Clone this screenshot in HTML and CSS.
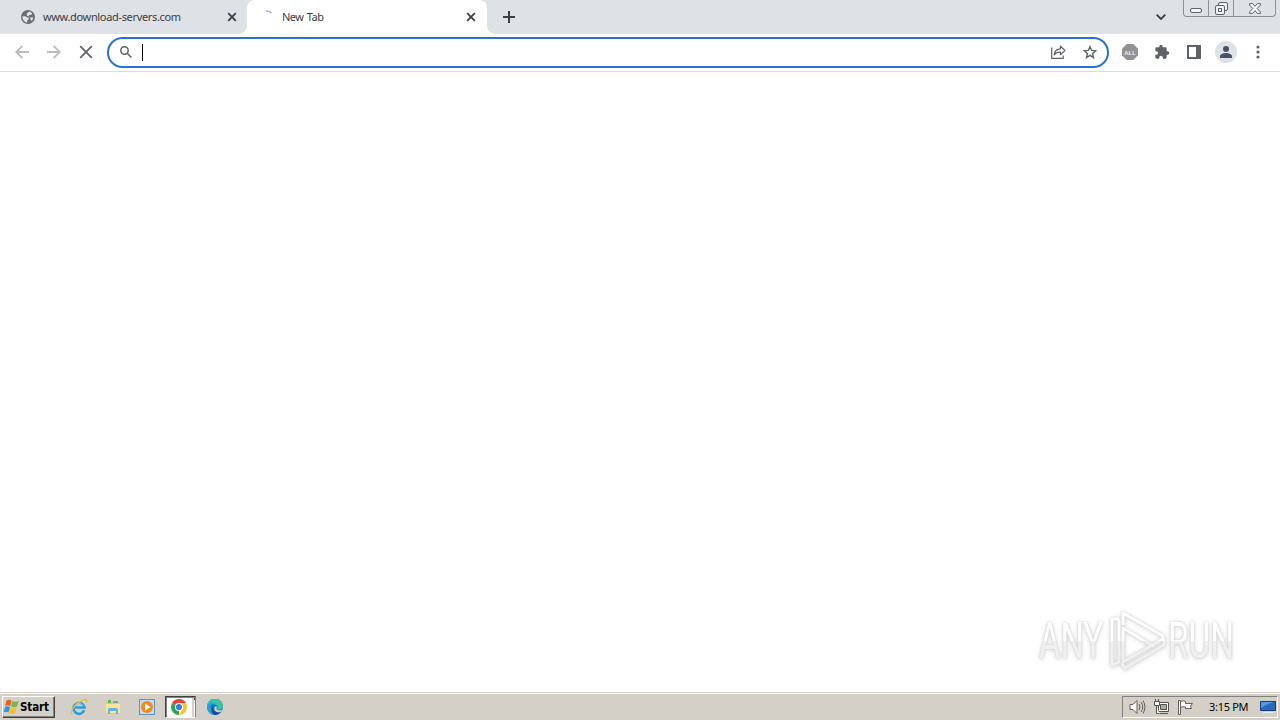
FILE: index.html
```
<!DOCTYPE html>
<html lang="en">
<head>
  <meta charset="UTF-8">
  <title>New Tab</title>
  <link rel="stylesheet" href="styles.css">
</head>
<body>
  <div class="tab-strip">
    <div class="tab">
      <svg class="favicon" width="14" height="14" viewBox="0 0 14 14">
        <circle cx="7" cy="7" r="7" fill="#6b6f74"/>
        <path d="M1.4 6.2h3.2l1.6 1.4h1.6v1.6L6.2 10.4v2.2A5.7 5.7 0 0 1 1.4 6.2zM7 2.2l2-.6 2.4 1.9-1.6 1.4H8.2L7.4 6.4 5.8 5.2V3.6zM8.6 7.4h3.8A5.6 5.6 0 0 1 10.4 11L9.6 9.4z" fill="#dee1e6"/>
      </svg>
      <span class="tab-title wide">www.download-servers.com</span>
      <svg class="close" width="10" height="10" viewBox="0 0 10 10"><path d="M1.2 1.2l7.6 7.6M8.8 1.2L1.2 8.8"/></svg>
    </div>
    <div class="tab active">
      <svg class="favicon" width="14" height="14" viewBox="0 0 14 14">
        <path d="M6 .9Q9 1 11.6 3" fill="none" stroke="#a9b9dd" stroke-width="1.8"/>
      </svg>
      <span class="tab-title">New Tab</span>
      <svg class="close" width="10" height="10" viewBox="0 0 10 10"><path d="M1.2 1.2l7.6 7.6M8.8 1.2L1.2 8.8"/></svg>
    </div>
    <svg class="new-tab" width="12" height="12" viewBox="0 0 12 12"><path d="M6 0v12M0 6h12" stroke="#3c4043" stroke-width="2"/></svg>
    <svg class="tab-search" width="10" height="6" viewBox="0 0 10 6"><path d="M.6.6L5 5 9.4.6" fill="none" stroke="#3c4043" stroke-width="1.8"/></svg>
    <div class="window-buttons">
      <div class="window-button minimize">
        <svg width="12" height="5" viewBox="0 0 12 5"><rect x=".5" y=".5" width="11" height="4" rx="1.5" fill="#f4f5f7" stroke="#5f636b"/></svg>
      </div>
      <div class="window-button restore">
        <svg width="13" height="13" viewBox="0 0 13 13" fill="#f0f1f4" stroke="#5f636b">
          <rect x="3.5" y=".5" width="9" height="8" rx="1.5"/>
          <rect x=".5" y="3.5" width="9" height="9" rx="1.5"/>
          <rect x="3.5" y="6.5" width="3" height="3"/>
        </svg>
      </div>
      <div class="window-button quit">
        <svg width="12" height="11" viewBox="0 0 12 11"><path d="M.6.6h3L6 3.3 8.4.6h3v1.5L8.2 5.5l3.2 3.4v1.5h-3L6 7.7l-2.4 2.7h-3V8.9l3.2-3.4L.6 2.1z" fill="#f4f5f7" stroke="#5f636b"/></svg>
      </div>
    </div>
  </div>

  <div class="toolbar">
    <div class="nav-buttons">
      <svg width="14" height="14" viewBox="0 0 14 14" class="muted"><path d="M14 7H1.5M7.4.8L1.2 7l6.2 6.2"/></svg>
      <svg width="14" height="14" viewBox="0 0 14 14" class="muted"><path d="M0 7h12.5M6.6.8L12.8 7l-6.2 6.2"/></svg>
      <svg width="14" height="14" viewBox="0 0 14 14"><path d="M1.2 1.2l11.6 11.6M12.8 1.2L1.2 12.8"/></svg>
    </div>
    <div class="omnibox">
      <svg width="12" height="12" viewBox="0 0 12 12" fill="none" stroke="#5f6368" stroke-width="1.5"><circle cx="4.5" cy="4.5" r="3.7"/><path d="M7.2 7.2l4.3 4.3"/></svg>
      <span class="caret"></span>
      <svg class="share" width="15" height="14" viewBox="0 0 15 14" fill="none" stroke="#5f6368" stroke-width="1.2">
        <path d="M.7 2.5v10.8h11.5v-2.8"/>
        <path d="M3.2 9.8C3.6 6 6 4 9.4 3.8V1.2L14 5.5 9.4 9.7V7.2C6.6 7.1 4.6 7.9 3.2 9.8z" stroke-linejoin="round"/>
      </svg>
      <svg width="14" height="14" viewBox="0 0 14 14"><path d="M7 1.6l1.6 3.8 4.2.4-3.2 2.7.9 4.1L7 10.4l-3.5 2.2.9-4.1-3.2-2.7 4.2-.4z" fill="none" stroke="#5f6368" stroke-width="1.4"/></svg>
    </div>
    <div class="extensions">
      <svg width="16" height="16" viewBox="0 0 16 16">
        <path d="M4.7 0h6.6L16 4.7v6.6L11.3 16H4.7L0 11.3V4.7z" fill="#929292"/>
        <text x="8" y="10.5" class="badge-text">ALL</text>
      </svg>
      <svg width="16" height="16" viewBox="0 0 24 24"><path fill="#5f6368" d="M20.5 11H19V7a2 2 0 0 0-2-2h-4V3.5a2.5 2.5 0 0 0-5 0V5H4a2 2 0 0 0-2 2v3.8h1.5a2.7 2.7 0 0 1 0 5.4H2V20a2 2 0 0 0 2 2h3.8v-1.5a2.7 2.7 0 0 1 5.4 0V22H17a2 2 0 0 0 2-2v-4h1.5a2.5 2.5 0 0 0 0-5z"/></svg>
      <svg width="16" height="16" viewBox="0 0 16 16"><path fill="#5f6368" fill-rule="evenodd" d="M1 1h14v14H1zM3 3v10h7V3z"/></svg>
      <svg class="avatar" width="22" height="22" viewBox="0 0 22 22"><circle cx="11" cy="11" r="11" fill="#dee1e6"/><circle cx="11" cy="8" r="3" fill="#475069"/><path d="M5 17v-1.7c0-2 3.5-3.3 6-3.3s6 1.300 6 3.300V17z" fill="#475069"/></svg>
      <svg class="menu" width="4" height="14" viewBox="0 0 4 14" fill="#5f6368"><circle cx="2" cy="2" r="1.6"/><circle cx="2" cy="7" r="1.6"/><circle cx="2" cy="12" r="1.6"/></svg>
    </div>
  </div>

  <div class="page">
    <svg class="watermark" width="200" height="64" viewBox="0 0 200 64">
      <defs>
        <linearGradient id="fade" x1="0" y1="0" x2="0" y2="64" gradientUnits="userSpaceOnUse"><stop offset=".51" stop-color="#fff"/><stop offset=".52" stop-color="#f0f0f0"/></linearGradient>
      </defs>
      <g fill="url(#fade)" class="mark-text">
        <text x="4" y="50" textLength="64" lengthAdjust="spacingAndGlyphs">ANY</text>
        <text x="133" y="50" textLength="66" lengthAdjust="spacingAndGlyphs">RUN</text>
      </g>
      <g fill="none" stroke="url(#fade)" stroke-width="3" stroke-linejoin="round" stroke-linecap="round">
        <path d="M118 38L88 20v34l40-23v-3L88 5v11"/>
        <path d="M83 11h-6v46l7-3V13"/>
        <path d="M129 32v5L90 60l-3-4"/>
      </g>
    </svg>
  </div>

  <div class="taskbar">
    <div class="start">
      <svg width="17" height="16" viewBox="0 0 17 16">
        <path d="M3.5 1.5q2.5-1.500 5 0L7.200 7q-2.500-1.500-5 0z" fill="#e85b2a"/>
        <path d="M9.3 2q2.5 1.5 6.5 0L14 7.6q-3 1.4-5.9 0z" fill="#7bb544"/>
        <path d="M2 8q2.5-1.5 5 0l-1.4 5.5q-2.5-1.5-5 0z" fill="#3d8fd6"/>
        <path d="M7.9 8.5q2.6 1.5 5.7 0l-1.5 5.6q-3 1.5-5.6 0z" fill="#f4bd2c"/>
      </svg>
      <span>Start</span>
    </div>
    <div class="quick-launch">
      <svg width="18" height="18" viewBox="0 0 18 18" fill="none">
        <path d="M14.2 12.3A5.5 5.5 0 1 1 14.5 9.5H4.5" stroke="#2b9fe0" stroke-width="2.6"/>
        <path d="M6 7.5Q9 3.5 13 7.5" stroke="#8bd5f7"/>
        <path d="M2.500 16C-1.5 15 5 5.8 12 2.5c4-2 5.5-.7 4.3 1.8" stroke="#e9bd3e" stroke-width="1.4"/>
      </svg>
      <svg width="16" height="16" viewBox="0 0 16 16">
        <path d="M1 2h5l1 1h7v12H1z" fill="#e8c967"/>
        <path d="M3 1h3v3H3z" fill="#67b865"/><path d="M8 2h5v2H8z" fill="#69a9d8"/>
        <path d="M1 5h14v9H1z" fill="#f7e399"/>
        <path d="M3 15v-4q0-2 2-2h6q2 0 2 2v4h-2v-3H5v3z" fill="#62b4e5"/>
      </svg>
      <svg class="player" width="16" height="16" viewBox="0 0 16 16"><rect x=".5" y=".5" width="15" height="15" fill="#c6dced" stroke="#5c94be"/><circle cx="8" cy="8" r="6" fill="#f28a1b"/><path d="M6 4.5v7L11.500 8z" fill="#fff"/></svg>
      <div class="running">
        <svg width="16" height="16" viewBox="0 0 16 16">
          <path d="M8 8L1.1 4A8 8 0 0 1 14.9 4z" fill="#df4434"/>
          <path d="M8 8v8A8 8 0 0 1 1.1 4z" fill="#32a350"/>
          <path d="M8 4h6.9A8 8 0 0 1 8 16l3.5-6z" fill="#f7c52b"/>
          <circle cx="8" cy="8" r="4" fill="#fff"/><circle cx="8" cy="8" r="3.1" fill="#347de5"/>
        </svg>
      </div>
      <svg class="edge" width="16" height="16" viewBox="0 0 16 16">
        <circle cx="8" cy="8" r="8" fill="#1976c5"/>
        <path d="M0 7.5A8 8 0 0 1 16 7c.2 3-2.5 4.2-5.5 3.7-1.2-.3-.5-1 0-2C11 6.5 8.5 5 5.5 5 2.5 5 .8 6.2 0 7.5z" fill="#39c3a5"/>
        <path d="M0 8C.8 3.5 5 2 9 4.5 5 4 2.5 6.5 4 11c.5 2 2 4 4 5A8 8 0 0 1 0 8z" fill="#23a5dc"/>
        <path d="M6.5 7.5c-1.5 4 2 6.5 7.5 5.5a8 8 0 0 1-6 3C4 14.5 3.5 9.5 6.5 7.5z" fill="#174b91"/>
        <path d="M10 8c-1.5 2 0 3.5 3 3.2 1.2 0 2-.5 2.5-1L14 13c-4 1-7.5-1-6.5-4.5Q8.5 6.5 10 8z" fill="#d4d0c8"/>
      </svg>
    </div>
    <div class="tray">
      <svg width="17" height="16" viewBox="0 0 17 16" fill="none" stroke="#62605c"><path d="M1 5.5h3l4-4v13l-4-4H1z" fill="#fff"/><path d="M10 5q2 3 0 6M12 3q3.5 5 0 10M14 1.5q4 6.5 0 13"/></svg>
      <svg width="17" height="16" viewBox="0 0 17 16" fill="#fff" stroke="#54524e"><path d="M5.5 3.5h10v9h-10zM7 14.5h8"/><path d="M7.5 5.5h6v5h-6z" fill="#aaa9a3"/><path d="M1.5 2.5h5v4h-5zM2.5 0v2M5.5 0v2M3.5 7v7.5h3"/></svg>
      <svg width="17" height="16" viewBox="0 0 17 16" fill="#fff" stroke="#62605c"><path d="M1.5 1.5h2v14h-2z"/><path d="M3.5 2.5q3-1.5 5 0v2h7l-2 2.5 1 2.5h-6V8q-2-1-5 .5z"/></svg>
      <span class="clock">3:15 PM</span>
      <svg class="desktop" width="16" height="14" viewBox="0 0 16 14"><path d="M.5 1.5h15v9H.5z" fill="#2868bd" stroke="#163d75"/><path d="M1 2h13Q7 4 1 8z" fill="#589ae1"/><path d="M3 12.5h10" stroke="#e7edf6"/></svg>
    </div>
  </div>
</body>
</html>
```
FILE: styles.css
```
* {
  box-sizing: border-box;
}

body {
  width: 1280px;
  height: 720px;
  margin: 0;
  overflow: hidden;
  display: flex;
  flex-direction: column;
  background: #fff;
  font-family: "Noto Sans", "Liberation Sans", sans-serif;
  font-size: 11px;
  color: #3c4043;
}

svg {
  display: block;
  flex: none;
}

.tab-strip {
  height: 34px;
  display: flex;
  align-items: center;
  background: #dee1e6;
}

.tab {
  width: 247px;
  height: 34px;
  padding: 0 10px 0 21px;
  display: flex;
  align-items: center;
  gap: 8px;
}

.tab.active {
  width: 240px;
  padding: 0 11px 0 13px;
  background: #fff;
  border-radius: 8px 8px 0 0;
  position: relative;
}

.tab.active::before,
.tab.active::after {
  content: "";
  position: absolute;
  bottom: 0;
  width: 8px;
  height: 8px;
}

.tab.active::before {
  left: -8px;
  background: radial-gradient(circle at 0 0, transparent 7.5px, #fff 8px);
}

.tab.active::after {
  right: -8px;
  background: radial-gradient(circle at 100% 0, transparent 7.5px, #fff 8px);
}

.tab-title {
  flex: 1;
  padding-bottom: 2px;
  letter-spacing: -0.5px;
  word-spacing: 1px;
  white-space: nowrap;
}

.tab-title.wide {
  letter-spacing: -0.34px;
}

.close {
  stroke: #3c4043;
  stroke-width: 1.8;
}

.new-tab {
  margin-left: 16px;
}

.tab-search {
  margin-left: auto;
}

.window-buttons {
  align-self: flex-start;
  display: flex;
  height: 17px;
  margin: 0 4px 0 17px;
  border: 1px solid #8b8f98;
  border-top: 0;
  border-radius: 0 0 4px 4px;
}

.window-button {
  width: 25px;
  display: flex;
  align-items: center;
  justify-content: center;
  border-right: 1px solid #8b8f98;
}

.window-button.minimize {
  padding-top: 4px;
}

.window-button.quit {
  width: 41px;
  border-right: 0;
}

.toolbar {
  height: 38px;
  display: flex;
  align-items: center;
  padding-bottom: 1px;
  border-bottom: 1px solid #dadce0;
}

.nav-buttons {
  display: flex;
  gap: 18px;
  width: 107px;
  padding-left: 15px;
  fill: none;
  stroke: #5f6368;
  stroke-width: 1.8;
}

.muted {
  stroke: #babcbe;
}

.omnibox {
  width: 1002px;
  height: 31px;
  display: flex;
  align-items: center;
  margin-top: 1px;
  padding: 0 10px 1px 11px;
  border: 2px solid #2a72cc;
  border-radius: 16px;
}

.caret {
  width: 1px;
  height: 17px;
  margin-left: 10px;
  background: #000;
}

.share {
  margin-left: auto;
  margin-right: 17px;
}

.extensions {
  display: flex;
  align-items: center;
  gap: 16px;
  padding-left: 13px;
}

.badge-text {
  font-family: "Liberation Sans", sans-serif;
  font-size: 6px;
  font-weight: bold;
  fill: #eee;
  text-anchor: middle;
}

.avatar {
  margin: 0 -3px;
}

.menu {
  margin-left: 6px;
}

.page {
  flex: 1;
  display: flex;
  align-items: flex-end;
  justify-content: flex-end;
}

.watermark {
  margin: 0 45px 20px 0;
  overflow: visible;
  filter: drop-shadow(0 0 1px #ccc) drop-shadow(0 1px 2px #ddd);
}

.mark-text {
  font-family: Roboto, "Liberation Sans", sans-serif;
  font-size: 50px;
}

.taskbar {
  height: 28px;
  display: flex;
  align-items: center;
  padding: 1px 2px 0;
  background: #d4d0c8;
  border-top: 1px solid #d4d0c8;
  box-shadow: inset 0 1px #fff;
  color: #000;
}

.start {
  width: 53px;
  height: 22px;
  display: flex;
  align-items: center;
  padding-left: 0;
  border: 1px solid;
  border-color: #fff #404040 #404040 #fff;
  box-shadow: inset -1px -1px #808080;
  font-family: "DejaVu Sans Condensed", "DejaVu Sans", sans-serif;
  font-size: 11.5px;
  font-weight: bold;
  letter-spacing: -0.1px;
}

.quick-launch {
  display: flex;
  align-items: center;
  gap: 17px;
  margin-left: 15px;
}

.player {
  margin-left: 1px;
}

.running {
  width: 31px;
  height: 22px;
  margin: 0 -5px 0 -7px;
  padding: 2px 0 0 5px;
  background:
    linear-gradient(#404040, #404040) 28px 0 / 2px 3px no-repeat,
    linear-gradient(#d4d0c8, #d4d0c8) 26px 0 / 2px 100% no-repeat,
    #fff;
  border: 1px solid;
  border-color: #404040 #808080 #fff #404040;
  box-shadow: inset 1px 1px #808080;
}

.edge {
  margin-left: -1px;
}

.tray {
  width: 156px;
  height: 22px;
  display: flex;
  align-items: center;
  gap: 7px;
  margin-left: auto;
  padding-left: 6px;
  border: 1px solid;
  border-color: #808080 #fff #fff #808080;
}

.clock {
  width: 40px;
  margin-left: 8px;
  padding-bottom: 1px;
  letter-spacing: -0.3px;
  white-space: nowrap;
}

.desktop {
  margin-left: 4px;
}
```
